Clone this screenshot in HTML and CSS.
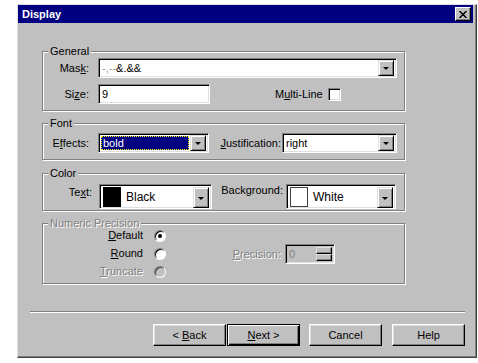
FILE: index.html
```html
<!DOCTYPE html>
<html>
<head>
  <title>Display</title>
  <link rel="stylesheet" href="styles.css">
</head>
<body>
<!-- Display properties dialog -->
<div class="dialog">
  <div class="titlebar">
    <span class="title">Display</span>
    <span class="close">
      <svg width="8" height="7" viewBox="0 0 8 7"><path d="M0.5 0 L7.5 7 M7.5 0 L0.5 7" stroke="#000" stroke-width="1.5" fill="none"/></svg>
    </span>
  </div>

  <div class="content">
    <fieldset class="group general">
      <legend>General</legend>
      <div class="row">
        <label class="lbl">Mas<u>k</u>:</label>
        <div class="field mask"><span class="value"><span class="faint">-,--</span>&amp;.&amp;&amp;</span><span class="drop"></span></div>
      </div>
      <div class="row">
        <label class="lbl">Si<u>z</u>e:</label>
        <div class="field size"><span class="value">9</span></div>
        <label class="multi">M<u>u</u>lti-Line</label>
        <span class="check"></span>
      </div>
    </fieldset>

    <fieldset class="group font-group">
      <legend>Font</legend>
      <div class="row">
        <label class="lbl">E<u>f</u>fects:</label>
        <div class="field effects"><span class="selected">bold</span><span class="drop"></span></div>
        <label class="lbl-just"><u>J</u>ustification:</label>
        <div class="field just"><span class="value">right</span><span class="drop"></span></div>
      </div>
    </fieldset>

    <fieldset class="group color-group">
      <legend>Color</legend>
      <div class="row top">
        <label class="lbl lbl-text">Te<u>x</u>t:</label>
        <div class="field swatch-combo text-combo"><span class="swatch black"></span><span class="swatch-name">Black</span><span class="drop"></span></div>
        <label class="lbl-bg">Background:</label>
        <div class="field swatch-combo bg-combo"><span class="swatch white"></span><span class="swatch-name">White</span><span class="drop"></span></div>
      </div>
    </fieldset>

    <fieldset class="group numeric">
      <legend class="disabled">Numeric Precision</legend>
      <div class="numeric-body">
        <div class="radios">
          <div class="radio-row"><label class="radio-lbl"><u>D</u>efault</label><span class="radio on"></span></div>
          <div class="radio-row"><label class="radio-lbl"><u>R</u>ound</label><span class="radio"></span></div>
          <div class="radio-row"><label class="radio-lbl disabled"><u>T</u>runcate</label><span class="radio off"></span></div>
        </div>
        <label class="lbl-prec disabled"><u>P</u>recision:</label>
        <div class="field spin">
          <span class="value">0</span>
          <span class="spin-btns"><span class="spin-up"></span><span class="spin-down"></span></span>
        </div>
      </div>
    </fieldset>
  </div>

  <div class="sep"></div>

  <div class="buttons">
    <button class="btn">&lt; <u>B</u>ack</button>
    <button class="btn default"><u>N</u>ext &gt;</button>
    <button class="btn cancel">Cancel</button>
    <button class="btn help">Help</button>
  </div>
</div>
</body>
</html>
```

FILE: styles.css
```css
body {
  margin: 0;
  background: #fff;
  font-family: "Liberation Sans", Arial, sans-serif;
  font-size: 11px;
  color: #000;
}
/* window frame */
.dialog {
  width: 460px;
  height: 354px;
  margin: 4px 0 0 17px;
  box-sizing: border-box;
  background: #c0c0c0;
  border: 1px solid;
  border-color: #dfdfdf #404040 #404040 #dfdfdf;
  box-shadow: inset -1px -1px 0 #808080;
  display: flex;
  flex-direction: column;
}
.titlebar {
  height: 18px;
  margin-right: 3px;
  padding-left: 4px;
  background: #000080;
  color: #fff;
  display: flex;
  align-items: center;
  justify-content: space-between;
}
.title {
  font-weight: bold;
}
.close {
  width: 16px;
  height: 14px;
  margin-right: 2px;
  box-sizing: border-box;
  background: #c0c0c0;
  border: 1px solid;
  border-color: #fff #000 #000 #fff;
  box-shadow: inset -1px -1px 0 #808080;
  display: flex;
  align-items: center;
  justify-content: center;
}
.content {
  padding: 22px 0 0 24px;
}
/* group boxes */
.group {
  margin: 0;
  padding: 0 0 6px;
  min-width: 0;
  width: 363px;
  box-sizing: border-box;
  border: 1px solid #808080;
  box-shadow: 1px 1px 0 #fff, inset 1px 1px 0 #fff;
}
.group legend {
  margin-left: 5px;
  padding: 0 2px;
  line-height: 13px;
  background: #c0c0c0;
}
.font-group {
  margin-top: 6px;
  padding: 3px 0 6px;
}
.color-group {
  margin-top: 7px;
  padding: 4px 0 1px;
}
.numeric {
  margin-top: 6px;
  padding-bottom: 4px;
}
.numeric legend {
  line-height: 12px;
}
.row {
  display: flex;
  align-items: center;
}
.row.top {
  align-items: flex-start;
}
.row + .row {
  margin-top: 6px;
}
.lbl {
  width: 46px;
  margin-right: 9px;
  text-align: right;
}
.disabled {
  color: #808080;
  text-shadow: 1px 1px 0 #fff;
}
/* sunken fields */
.field {
  height: 20px;
  box-sizing: border-box;
  padding: 2px;
  background: #fff;
  border: 1px solid;
  border-color: #808080 #fff #fff #808080;
  box-shadow: inset 1px 1px 0 #000, inset -1px -1px 0 #dfdfdf;
  display: flex;
  align-items: center;
}
.field .value {
  padding-left: 1px;
  white-space: nowrap;
}
.faint {
  color: #999;
}
.drop {
  margin-left: auto;
  width: 16px;
  height: 16px;
  flex: none;
  box-sizing: border-box;
  background: #c0c0c0;
  border: 1px solid;
  border-color: #dfdfdf #000 #000 #dfdfdf;
  box-shadow: inset 1px 1px 0 #fff, inset -1px -1px 0 #808080;
  display: flex;
  align-items: center;
  justify-content: center;
}
.drop::after {
  content: "";
  border-left: 3px solid transparent;
  border-right: 3px solid transparent;
  border-top: 3px solid #000;
  margin-top: 1px;
}
.mask {
  width: 299px;
}
.size {
  width: 112px;
}
.multi {
  margin-left: 65px;
  margin-right: 5px;
}
.check {
  width: 13px;
  height: 13px;
  box-sizing: border-box;
  background: #fff;
  border: 1px solid;
  border-color: #808080 #fff #fff #808080;
  box-shadow: inset 1px 1px 0 #000, inset -1px -1px 0 #dfdfdf;
}
.effects {
  width: 111px;
}
.selected {
  flex: 1;
  align-self: stretch;
  margin-right: 1px;
  padding-left: 2px;
  background: #000080;
  color: #fff;
  outline: 1px dotted #ff0;
  outline-offset: -1px;
  display: flex;
  align-items: center;
}
.lbl-just {
  width: 62px;
  margin: 0 1px 0 10px;
  text-align: right;
}
.just {
  width: 115px;
}
/* colour pickers */
.lbl-text {
  width: 49px;
  margin: 2px 7px 0 0;
}
.lbl-bg {
  width: 62px;
  margin: 0 3px 0 9px;
  text-align: right;
}
.swatch-combo {
  height: 25px;
}
.text-combo {
  width: 113px;
}
.bg-combo {
  width: 110px;
}
.swatch-combo .drop {
  height: 21px;
  align-self: stretch;
}
.swatch {
  width: 18px;
  height: 20px;
  margin-left: 1px;
  box-sizing: border-box;
  border: 1px solid #000;
}
.swatch.black {
  background: #000;
}
.swatch.white {
  background: #fff;
  border-color: #404040;
}
.swatch-name {
  margin-left: 5px;
  font-size: 12px;
}
/* numeric precision */
.numeric-body {
  margin-top: -1px;
  display: flex;
  align-items: center;
}
.radios {
  display: flex;
  flex-direction: column;
  gap: 3px;
}
.radio-row {
  height: 15px;
  line-height: 13px;
  display: flex;
  align-items: center;
}
.radio-lbl {
  width: 100px;
  margin-right: 11px;
  text-align: right;
}
.radio {
  position: relative;
  width: 12px;
  height: 12px;
  box-sizing: border-box;
  border-radius: 50%;
  background: #fff;
  border: 1px solid;
  border-color: #808080 #fff #fff #808080;
  box-shadow: inset 1px 1px 0 #000;
}
.radio.on::after {
  content: "";
  position: absolute;
  left: 3px;
  top: 3px;
  width: 4px;
  height: 4px;
  border-radius: 50%;
  background: #000;
}
.radio.off {
  background: #c0c0c0;
  box-shadow: inset 1px 1px 0 #404040;
}
.lbl-prec {
  width: 50px;
  margin: 0 4px 0 65px;
  text-align: right;
}
.spin {
  width: 50px;
  background: #c0c0c0;
  color: #808080;
}
.spin-btns {
  margin-left: auto;
  width: 16px;
  align-self: stretch;
  display: flex;
  flex-direction: column;
}
.spin-up,
.spin-down {
  flex: 1;
  box-sizing: border-box;
  background: #c0c0c0;
  border: 1px solid;
  border-color: #dfdfdf #000 #000 #dfdfdf;
  box-shadow: inset -1px -1px 0 #808080;
}
/* bottom */
.sep {
  margin: 27px 11px 0 12px;
  border-top: 1px solid #808080;
  border-bottom: 1px solid #fff;
}
.buttons {
  margin: 11px 11px 0 0;
  display: flex;
  justify-content: flex-end;
}
.btn {
  width: 73px;
  height: 22px;
  padding: 0;
  box-sizing: border-box;
  font: inherit;
  color: #000;
  background: #c0c0c0;
  border: 1px solid;
  border-color: #fff #000 #000 #fff;
  box-shadow: inset -1px -1px 0 #808080, inset 1px 1px 0 #dfdfdf;
}
.btn.default {
  margin-left: 1px;
  border-color: #000;
  box-shadow: inset 1px 1px 0 #fff, inset -1px -1px 0 #000, inset -2px -2px 0 #808080;
}
.btn.cancel {
  margin-left: 9px;
}
.btn.help {
  margin-left: 10px;
}
```
